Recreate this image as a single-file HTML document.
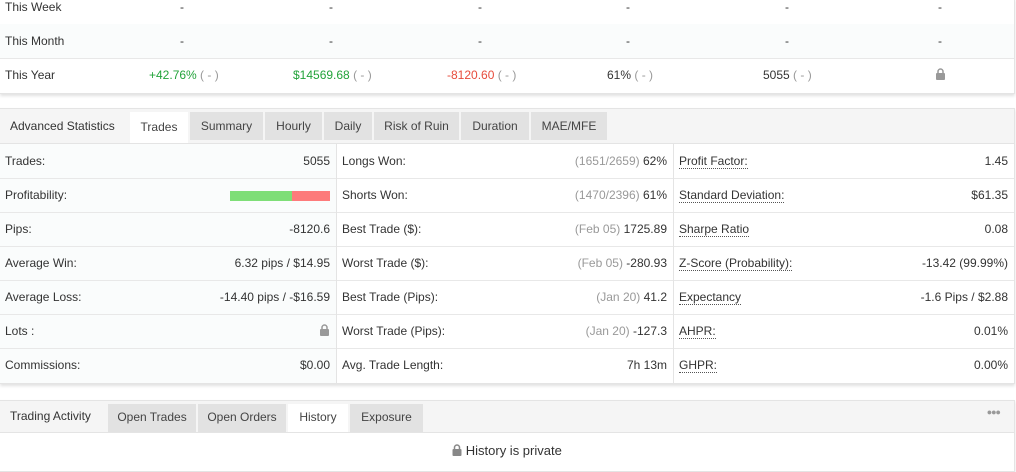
<!DOCTYPE html>
<html><head><style>
body{margin:0;width:1016px;height:472px;background:#fff;font-family:"Liberation Sans",sans-serif;font-size:12px;color:#333;position:relative;overflow:hidden}
.a{position:absolute}
.card{position:absolute;left:0;width:1014px;background:#fff;border:1px solid #e4e4e4;border-left:none;box-shadow:0 2px 3px rgba(0,0,0,.12)}
.tr{position:absolute;left:0;width:1014px;height:34px;border-bottom:1px solid #e8e8e8}
.c{position:absolute;top:0;line-height:34px;text-align:center}
.g{color:#22a33a}.r{color:#e74c3c}.m{color:#999}
.tabs{position:absolute;left:0;top:0;width:1014px;background:#f5f5f5;border-bottom:1px solid #e4e4e4}
.tab{position:absolute;top:3px;background:#e2e2e2;text-align:center;color:#444;border-right:1px solid #f5f5f5}
.tab.on{background:#fff}
.row{position:absolute;height:34px;border-bottom:1px solid #e8e8e8;line-height:34px}
.l{position:absolute;left:5px}.v{position:absolute;right:6px}
.u{border-bottom:1px dotted #555;line-height:14px;display:inline-block}
</style></head><body>
<div class="card" style="top:-2px;height:95px;border-top:none">
<div class="tr" style="top:-8px;background:#fff"><div class="c" style="left:5px">This Week</div><div class="c" style="left:180px">-</div><div class="c" style="left:329px">-</div><div class="c" style="left:478px">-</div><div class="c" style="left:626px">-</div><div class="c" style="left:785px">-</div><div class="c" style="left:938px">-</div></div>
<div class="tr" style="top:26px;background:#fafcfc"><div class="c" style="left:5px">This Month</div><div class="c" style="left:180px">-</div><div class="c" style="left:329px">-</div><div class="c" style="left:478px">-</div><div class="c" style="left:626px">-</div><div class="c" style="left:785px">-</div><div class="c" style="left:938px">-</div></div>
<div class="tr" style="top:60px;border:none"><div class="c" style="left:5px">This Year</div><div class="c g" style="left:149px">+42.76% <span class="m">( - )</span></div><div class="c g" style="left:293px">$14569.68 <span class="m">( - )</span></div><div class="c r" style="left:447px">-8120.60 <span class="m">( - )</span></div><div class="c" style="left:607px">61% <span class="m">( - )</span></div><div class="c" style="left:763px">5055 <span class="m">( - )</span></div><div class="c" style="left:935px;top:10px;line-height:12px"><svg width="11" height="12"><path d="M3 5V3.5a2.5 2.5 0 0 1 5 0V5" stroke="#999" stroke-width="1.5" fill="none"/><rect x="1" y="5" width="9" height="7" rx="1" fill="#999"/></svg></div></div>
</div>

<div class="card" style="top:108px;height:274px">
<div class="tabs" style="height:34px">
<div class="a" style="left:10px;top:0;line-height:34px;color:#333">Advanced Statistics</div>
<div class="tab on" style="left:130px;width:58px;height:31px;line-height:31px">Trades</div>
<div class="tab" style="left:190px;width:73px;height:28px;line-height:28px">Summary</div>
<div class="tab" style="left:265px;width:57px;height:28px;line-height:28px">Hourly</div>
<div class="tab" style="left:324px;width:48px;height:28px;line-height:28px">Daily</div>
<div class="tab" style="left:374px;width:85px;height:28px;line-height:28px">Risk of Ruin</div>
<div class="tab" style="left:461px;width:68px;height:28px;line-height:28px">Duration</div>
<div class="tab" style="left:531px;width:76px;height:28px;line-height:28px">MAE/MFE</div>
</div>
<div class="a" style="left:336px;top:35px;width:1px;height:239px;background:#e4e4e4"></div>
<div class="a" style="left:673px;top:35px;width:1px;height:239px;background:#e4e4e4"></div>
<div class="a" style="left:0;top:35px;width:336px;height:239px;background:#fafcfc"></div>
<div id="rows"></div>
</div>

<div class="card" style="top:400px;height:70px">
<div class="tabs" style="height:31px">
<div class="a" style="left:10px;line-height:30px">Trading Activity</div>
<div class="tab" style="left:108px;width:88px;height:28px;line-height:26px">Open Trades</div>
<div class="tab" style="left:198px;width:88px;height:28px;line-height:26px">Open Orders</div>
<div class="tab on" style="left:288px;width:60px;height:28px;line-height:26px">History</div>
<div class="tab" style="left:350px;width:73px;height:28px;line-height:26px">Exposure</div>
<div class="a" style="right:14px;top:6px;color:#999;font-size:9px;letter-spacing:-1px">●●●</div>
</div>
<div class="a" style="left:0;width:1014px;top:32px;line-height:36px;text-align:center;font-size:13px"><svg width="10" height="12" style="vertical-align:-1px"><path d="M2.5 5V3.5a2.5 2.5 0 0 1 5 0V5" stroke="#888" stroke-width="1.5" fill="none"/><rect x="0.5" y="5" width="9" height="7" rx="1" fill="#888"/></svg> History is private</div>
</div>
<script>
var d=[
["Trades:","5055","Longs Won:","<span class=m>(1651/2659)</span> 62%","<span class=u>Profit Factor:</span>","1.45"],
["Profitability:","<span style='display:inline-block;width:62px;height:10px;background:#7ede77;vertical-align:middle'></span><span style='display:inline-block;width:38px;height:10px;background:#fd7b7b;vertical-align:middle'></span>","Shorts Won:","<span class=m>(1470/2396)</span> 61%","<span class=u>Standard Deviation:</span>","$61.35"],
["Pips:","-8120.6","Best Trade ($):","<span class=m>(Feb 05)</span> 1725.89","<span class=u>Sharpe Ratio</span>","0.08"],
["Average Win:","6.32 pips / $14.95","Worst Trade ($):","<span class=m>(Feb 05)</span> -280.93","<span class=u>Z-Score (Probability):</span>","-13.42 (99.99%)"],
["Average Loss:","-14.40 pips / -$16.59","Best Trade (Pips):","<span class=m>(Jan 20)</span> 41.2","<span class=u>Expectancy</span>","-1.6 Pips / $2.88"],
["Lots :","<svg width=11 height=12 style='vertical-align:-1px'><path d='M3 5V3.5a2.5 2.5 0 0 1 5 0V5' stroke='#999' stroke-width='1.5' fill='none'/><rect x=1 y=5 width=9 height=7 rx=1 fill='#999'/></svg>","Worst Trade (Pips):","<span class=m>(Jan 20)</span> -127.3","<span class=u>AHPR:</span>","0.01%"],
["Commissions:","$0.00","Avg. Trade Length:","7h 13m","<span class=u>GHPR:</span>","0.00%"]];
var h="";
d.forEach(function(r,i){var t=35+i*34;var b=i==6?"border:none;":"";
h+="<div class=row style='"+b+"left:0;width:336px;top:"+t+"px'><span class=l>"+r[0]+"</span><span class=v>"+r[1]+"</span></div>";
h+="<div class=row style='"+b+"left:337px;width:336px;top:"+t+"px'><span class=l>"+r[2]+"</span><span class=v>"+r[3]+"</span></div>";
h+="<div class=row style='"+b+"left:674px;width:340px;top:"+t+"px'><span class=l>"+r[4]+"</span><span class=v>"+r[5]+"</span></div>";});
document.getElementById("rows").innerHTML=h;
</script>
</body></html>
